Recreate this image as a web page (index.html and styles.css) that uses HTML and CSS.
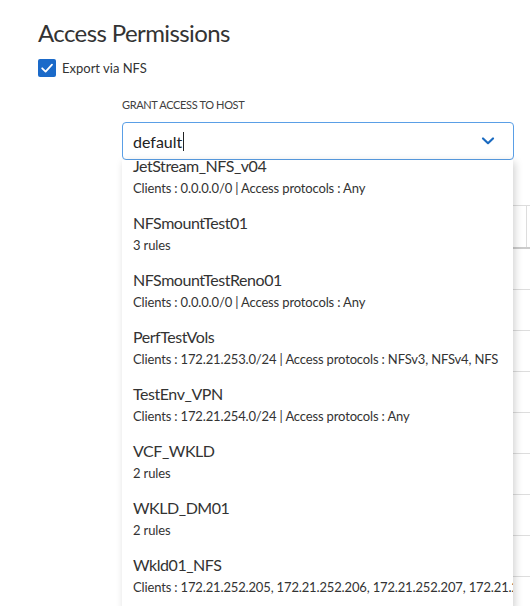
FILE: index.html
```html
<!DOCTYPE html>
<html>
<head>
<meta charset="utf-8">
<link rel="stylesheet" href="styles.css">
</head>
<body>
<div class="page">
  <h2 class="title">Access Permissions</h2>
  <label class="check">
    <span class="box"><svg width="14" height="14" viewBox="0 0 14 14"><path d="M2.2 7.3 L5.6 10.6 L12 3.6" fill="none" stroke="#fff" stroke-width="1.8" stroke-linecap="round" stroke-linejoin="round"/></svg></span>
    <span class="check-text">Export via NFS</span>
  </label>
  <div class="field">
    <div class="field-label">GRANT ACCESS TO HOST</div>
    <div class="combo">
      <div class="input">
        <span class="value">default<span class="caret"></span></span>
        <svg class="chev" width="14" height="10" viewBox="0 0 14 10"><path d="M2 2.5 L7 7.2 L12 2.5" fill="none" stroke="#1a6ac0" stroke-width="2.2" stroke-linecap="round" stroke-linejoin="round"/></svg>
      </div>
      <div class="table-bg">
        <div class="thead"><div class="th"></div><div class="th"></div></div>
        <div class="tr"></div><div class="tr"></div><div class="tr"></div><div class="tr"></div>
        <div class="tr"></div><div class="tr"></div><div class="tr"></div><div class="tr"></div>
      </div>
      <div class="menu">
        <ul class="list">
          <li class="item"><div class="name">JetStream_NFS_v04</div><div class="sub">Clients : 0.0.0.0/0 | Access protocols : Any</div></li>
          <li class="item"><div class="name">NFSmountTest01</div><div class="sub">3 rules</div></li>
          <li class="item"><div class="name">NFSmountTestReno01</div><div class="sub">Clients : 0.0.0.0/0 | Access protocols : Any</div></li>
          <li class="item"><div class="name">PerfTestVols</div><div class="sub">Clients : 172.21.253.0/24 | Access protocols : NFSv3, NFSv4, NFS</div></li>
          <li class="item"><div class="name">TestEnv_VPN</div><div class="sub">Clients : 172.21.254.0/24 | Access protocols : Any</div></li>
          <li class="item"><div class="name">VCF_WKLD</div><div class="sub">2 rules</div></li>
          <li class="item"><div class="name">WKLD_DM01</div><div class="sub">2 rules</div></li>
          <li class="item"><div class="name">Wkld01_NFS</div><div class="sub">Clients : 172.21.252.205, 172.21.252.206, 172.21.252.207, 172.21.252.208 | Access protocols : Any</div></li>
        </ul>
      </div>
    </div>
  </div>
</div>
</body>
</html>
```

FILE: styles.css
```css
html, body {
  margin: 0;
  padding: 0;
  background: #fff;
  overflow: hidden;
}
body {
  font-family: "Lato", "Noto Sans", sans-serif;
  color: #333;
  width: 530px;
  height: 606px;
}
.page {
  padding: 18px 0 0 38px;
}
.title {
  margin: 0;
  font-size: 24px;
  font-weight: 400;
  line-height: 30px;
  letter-spacing: -0.6px;
  color: #333;
}
.check {
  display: flex;
  align-items: center;
  gap: 6px;
  margin-top: 11px;
  height: 18px;
}
.box {
  width: 18px;
  height: 18px;
  border-radius: 2px;
  background: #1b6ac9;
  display: flex;
  align-items: center;
  justify-content: center;
}
.check-text {
  font-size: 13px;
  color: #333;
}
.field {
  margin-left: 84px;
  margin-top: 21px;
}
.field-label {
  font-size: 11px;
  color: #404040;
  line-height: 14px;
  letter-spacing: -0.35px;
}
.combo {
  position: relative;
  margin-top: 10px;
}
.input {
  width: 392px;
  height: 38px;
  box-sizing: border-box;
  border: 1px solid #5a9fe6;
  border-radius: 4px;
  display: flex;
  align-items: center;
  justify-content: space-between;
  padding: 0 18px 0 10px;
  background: #fff;
}
.value {
  font-size: 16px;
  color: #222;
  display: flex;
  align-items: center;
}
.caret {
  display: inline-block;
  width: 1px;
  height: 19px;
  background: #222;
  margin-left: 1px;
}
.table-bg {
  margin-top: 45px;
  width: 420px;
}
.thead {
  height: 41px;
  border: 1px solid #ddd;
  border-bottom: 2px solid #ccc;
  display: grid;
  grid-template-columns: 403px 1fr;
}
.th + .th {
  border-left: 1px solid #ddd;
}
.tr {
  height: 41px;
  border-bottom: 1px solid #ddd;
  box-sizing: border-box;
}
.menu {
  position: absolute;
  left: 0;
  top: 38px;
  width: 391px;
  height: 450px;
  background: #fff;
  overflow: hidden;
  box-shadow: 2px 2px 8px rgba(0, 0, 0, 0.18);
}
.list {
  list-style: none;
  margin: -12px 0 0 0;
  padding: 0;
}
.item {
  height: 57px;
  box-sizing: border-box;
  padding: 8px 11px 0 11px;
  white-space: nowrap;
}
.name {
  font-size: 16px;
  line-height: 20px;
  letter-spacing: -0.45px;
  color: #333;
}
.sub {
  font-size: 13px;
  line-height: 18px;
  margin-top: 3px;
  letter-spacing: -0.15px;
  color: #333;
}
```
